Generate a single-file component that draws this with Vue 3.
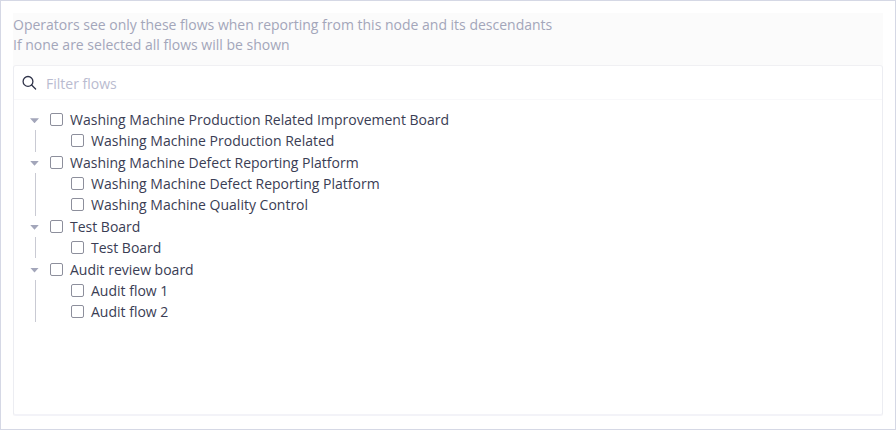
<script setup>
const groups = [
  { name: "Washing Machine Production Related Improvement Board", flows: ["Washing Machine Production Related"] },
  { name: "Washing Machine Defect Reporting Platform", flows: ["Washing Machine Defect Reporting Platform", "Washing Machine Quality Control"] },
  { name: "Test Board", flows: ["Test Board"] },
  { name: "Audit review board", flows: ["Audit flow 1", "Audit flow 2"] },
];
</script>

<template>
  <div class="frame">
    <div class="panel">
      <p class="hint">Operators see only these flows when reporting from this node and its descendants</p>
      <p class="hint">If none are selected all flows will be shown</p>
      <div class="box">
        <div class="filter">
          <svg class="search" width="16" height="16" viewBox="0 0 16 16" fill="none" stroke="#2f3349" stroke-width="1.3">
            <circle cx="6" cy="6.4" r="4.9" />
            <path d="M9.6 10 L13.6 14" stroke-linecap="round" />
          </svg>
          <span class="placeholder">Filter flows</span>
        </div>
        <ul class="tree">
          <li v-for="group in groups" :key="group.name">
            <div class="row">
              <span class="caret"></span>
              <span class="check"></span>
              <span>{{ group.name }}</span>
            </div>
            <ul class="children">
              <li v-for="flow in group.flows" :key="flow" class="row">
                <span class="check"></span>
                <span>{{ flow }}</span>
              </li>
            </ul>
          </li>
        </ul>
      </div>
    </div>
  </div>
</template>

<style>
html, body {
  margin: 0;
  background: #fff;
}
</style>

<style scoped>
.frame {
  box-sizing: border-box;
  width: 896px;
  height: 430px;
  padding: 12px;
  border: 1px solid #d5d8e5;
  font-family: "Open Sans", sans-serif;
  font-size: 14px;
}
.panel {
  background: #fbfbfb;
  height: 403px;
}
.hint {
  margin: 0;
  height: 20px;
  line-height: 20px;
  color: #a3a6ba;
}
.hint:first-child {
  padding-top: 2px;
}
.box {
  box-sizing: border-box;
  height: 351px;
  margin-top: 10px;
  background: #fff;
  border: 1px solid #ecedf2;
  border-top-color: #f0f0f3;
  border-bottom: 2px solid #f3f3f8;
  border-radius: 3px;
}
.filter {
  display: flex;
  align-items: center;
  height: 33px;
  padding-left: 8px;
  border-bottom: 1px solid #f8f8fa;
}
.search {
  margin-right: 8px;
}
.placeholder {
  padding-top: 2px;
  color: #b9bbd0;
}
.tree, .children {
  list-style: none;
  margin: 0;
  padding: 0;
}
.tree {
  padding: 8.97px 0 0 16px;
}
.tree > li:last-child {
  margin-top: 0.1px;
}
.row {
  display: flex;
  align-items: center;
  height: 21.34px;
  color: #3a3d54;
  white-space: nowrap;
}
.caret {
  flex: none;
  width: 9px;
  height: 5px;
  margin-top: 2px;
  margin-right: 11px;
  background: #a3a6ba;
  clip-path: polygon(0 0, 100% 0, 50% 100%);
}
.check {
  flex: none;
  box-sizing: border-box;
  width: 13px;
  height: 13px;
  margin-right: 7px;
  border: 1px solid #8d8f9c;
  border-radius: 2px;
}
.children {
  margin-left: 5px;
  padding-left: 35px;
  border-left: 1px solid #c9cad3;
}
</style>
